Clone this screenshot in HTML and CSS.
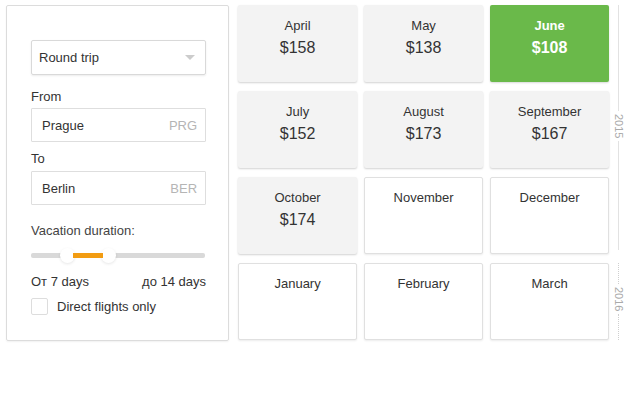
FILE: index.html
```html
<!DOCTYPE html>
<html>
<head>
<meta charset="utf-8">
<link rel="stylesheet" href="styles.css">
</head>
<body>
<div class="page">
  <div class="panel">
    <div class="select">
      <span>Round trip</span>
      <span class="caret"></span>
    </div>
    <div class="label from">From</div>
    <div class="field"><span>Prague</span><span class="code">PRG</span></div>
    <div class="label to">To</div>
    <div class="field"><span>Berlin</span><span class="code">BER</span></div>
    <div class="label vac">Vacation duration:</div>
    <div class="slider">
      <div class="track"></div>
      <div class="fill"></div>
      <div class="knob knob-a"></div>
      <div class="knob knob-b"></div>
    </div>
    <div class="range"><span>От 7 days</span><span>до 14 days</span></div>
    <label class="check"><span class="box"></span><span>Direct flights only</span></label>
  </div>

  <div class="grid">
    <div class="card price"><div class="m">April</div><div class="p">$158</div></div>
    <div class="card price"><div class="m">May</div><div class="p">$138</div></div>
    <div class="card best"><div class="m">June</div><div class="p">$108</div></div>
    <div class="card price"><div class="m">July</div><div class="p">$152</div></div>
    <div class="card price"><div class="m">August</div><div class="p">$173</div></div>
    <div class="card price"><div class="m">September</div><div class="p">$167</div></div>
    <div class="card price"><div class="m">October</div><div class="p">$174</div></div>
    <div class="card empty"><div class="m">November</div></div>
    <div class="card empty"><div class="m">December</div></div>
    <div class="card empty"><div class="m">January</div></div>
    <div class="card empty"><div class="m">February</div></div>
    <div class="card empty"><div class="m">March</div></div>
  </div>

  <div class="years">
    <div class="year y2015">
      <div class="line solid"></div>
      <div class="ylabel">2015</div>
      <div class="line solid"></div>
    </div>
    <div class="year y2016">
      <div class="line dotted"></div>
      <div class="ylabel">2016</div>
      <div class="line dotted"></div>
    </div>
  </div>
</div>
</body>
</html>
```

FILE: styles.css
```css
* { box-sizing: border-box; }
html, body { margin: 0; padding: 0; background: #fff; }
body {
  font-family: "Liberation Sans", Arial, sans-serif;
  color: #333;
  width: 626px;
  height: 400px;
  overflow: hidden;
}
.page {
  display: flex;
  align-items: flex-start;
  padding: 5px 0 0 6px;
}
.panel {
  width: 224px;
  height: 336px;
  border: 1px solid #dcdcdc;
  border-radius: 2px;
  box-shadow: 0 1px 2px rgba(0,0,0,0.06);
  padding: 34px 22px 0 24px;
  display: flex;
  flex-direction: column;
}
.select {
  height: 35px;
  border: 1px solid #d9d9d9;
  border-radius: 2px;
  box-shadow: 0 1px 2px rgba(0,0,0,0.08);
  display: flex;
  align-items: center;
  justify-content: space-between;
  padding: 0 10px 0 7px;
  font-size: 13px;
}
.caret {
  width: 0; height: 0;
  border-left: 5px solid transparent;
  border-right: 5px solid transparent;
  border-top: 5px solid #ccc;
}
.label {
  font-size: 13px;
  line-height: 13px;
}
.label.from { margin: 15px 0 5px 0; }
.label.to { margin: 10px 0 6px 0; }
.field {
  height: 34px;
  border: 1px solid #dedede;
  border-radius: 1px;
  display: flex;
  align-items: center;
  justify-content: space-between;
  padding: 0 8px 0 10px;
  font-size: 13px;
}
.code { color: #b5b5b5; }
.label.vac { margin: 19px 0 0 0; color: #444; }
.slider {
  position: relative;
  height: 18px;
  margin-top: 9px;
}
.track {
  position: absolute;
  left: 0; right: 1px; top: 7px;
  height: 5px;
  background: #d9d9d9;
  border-radius: 2px;
}
.fill {
  position: absolute;
  left: 42px; width: 30px; top: 7px;
  height: 5px;
  background: #f29c12;
  z-index: 2;
}
.knob {
  position: absolute;
  top: 2px;
  width: 15px; height: 15px;
  border-radius: 50%;
  background: #fff;
  box-shadow: 0 1px 3px rgba(0,0,0,0.1);
  z-index: 1;
}
.knob-a { left: 29px; }
.knob-b { left: 70px; }
.range {
  display: flex;
  justify-content: space-between;
  font-size: 13px;
  margin-top: 10px;
}
.check {
  display: flex;
  align-items: center;
  font-size: 13px;
  margin-top: 9px;
}
.box {
  width: 17px; height: 17px;
  border: 1px solid #ddd;
  border-radius: 2px;
  margin-right: 9px;
  background: #fff;
}
.grid {
  margin-left: 9px;
  display: grid;
  grid-template-columns: repeat(3, 119px);
  grid-auto-rows: 77px;
  column-gap: 7px;
  row-gap: 9px;
}
.card {
  border-radius: 2px;
  text-align: center;
  padding-top: 13px;
}
.card .m { font-size: 13px; line-height: 15px; }
.card .p { font-size: 16px; line-height: 18px; margin-top: 6px; }
.price {
  background: #f3f3f3;
  box-shadow: 0 1px 2px rgba(0,0,0,0.18);
}
.best {
  background: #6ab94a;
  color: #fff;
  font-weight: bold;
  box-shadow: 0 1px 2px rgba(0,0,0,0.15);
}
.empty {
  background: #fff;
  border: 1px solid #e0e0e0;
  padding-top: 12px;
  box-shadow: 0 1px 2px rgba(0,0,0,0.08);
}
.years {
  width: 17px;
  display: flex;
  flex-direction: column;
  align-items: center;
  padding-left: 2px;
}
.year {
  display: flex;
  flex-direction: column;
  align-items: center;
}
.y2015 { height: 245px; }
.y2016 { height: 77px; margin-top: 13px; }
.line { flex: 1; width: 0; }
.solid { border-left: 1px solid #e2e2e2; }
.dotted { border-left: 1px dotted #cfcfcf; }
.ylabel {
  writing-mode: vertical-rl;
  font-size: 11px;
  color: #aaa;
  padding: 3px 0;
  line-height: 11px;
}
.y2015 .line:first-child { flex: 0 0 106px; }
.y2016 .line:first-child { flex: 0 0 21px; }
```
